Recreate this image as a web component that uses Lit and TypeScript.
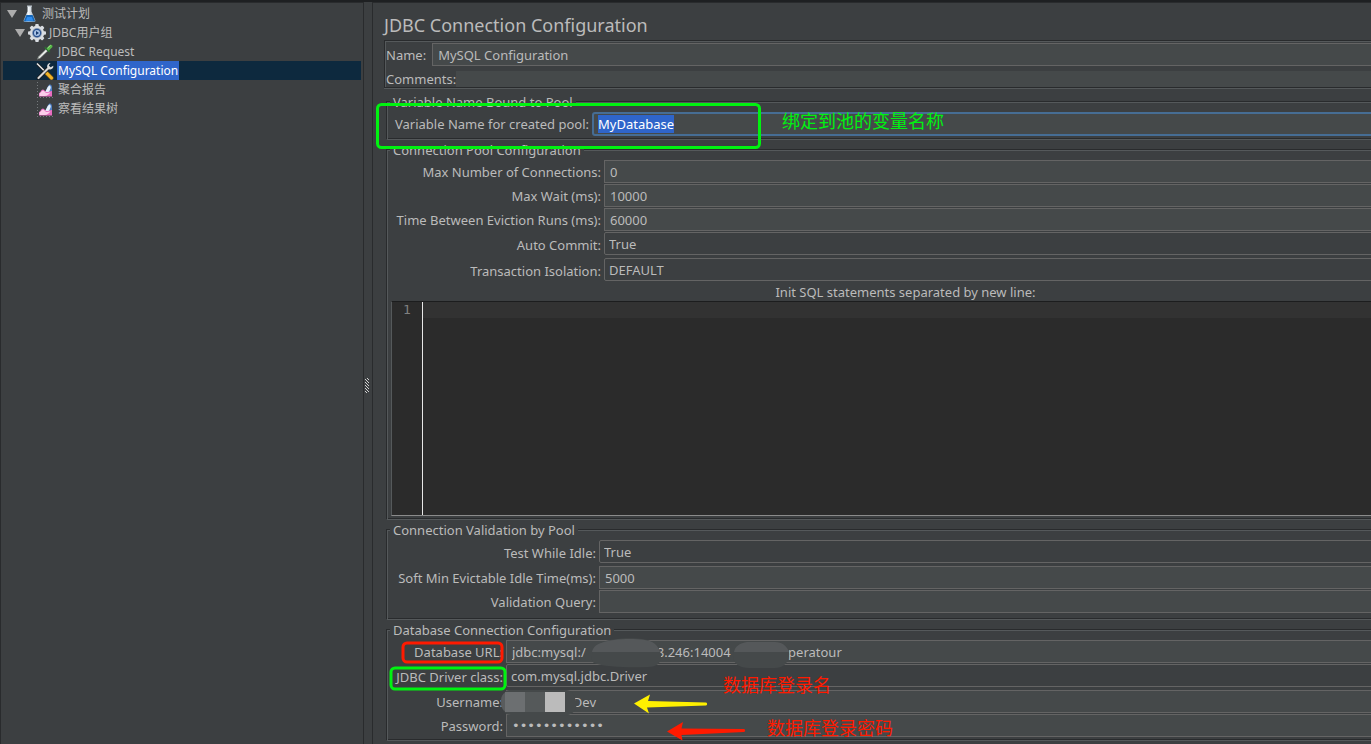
import { LitElement, html, css, svg } from "lit";
import { customElement, query, state } from "lit/decorators.js";

const flask = svg`<defs><linearGradient id="glass"><stop offset="0" stop-color="#8ea3b5"/><stop offset=".4" stop-color="#f4f8fb"/><stop offset="1" stop-color="#93a5b4"/></linearGradient></defs><path d="M7.500 1h4v5.500l3.800 8.500c.5 1.200-.1 2-1.300 2H5c-1.200 0-1.800-.8-1.300-2l3.800-8.500z" fill="url(#glass)"/><path d="M6.400 10h6.200l2.200 5.200c.3.800-.1 1.300-.9 1.300H5.100c-.8 0-1.200-.5-.9-1.300z" fill="#1667b8"/><path d="M7.200 12h4.600l1.500 3.800H5.700z" fill="#2c8cf0"/><rect x="7" y="0.500" width="5" height="1.200" fill="#b9c4cc"/>`;
const gear = svg`<g fill="#d9dde2">${[0, 45, 90, 135].map(
  (a) => svg`<rect x="7.200" y="0" width="3.600" height="18" rx="1" transform="rotate(${a} 9 9)"/>`
)}<circle cx="9" cy="9" r="7.200"/></g><circle cx="9" cy="9" r="5" fill="#8b9cb4"/><circle cx="9" cy="9" r="4.200" fill="#2a5290"/><circle cx="9" cy="9" r="3" fill="#a9c3e6"/><path d="M8 7l3 2-3 2z" fill="#173a70"/>`;
const dropper = svg`<path d="M1 16.500l1.200-3L10 6l2 2-7.800 7.500z" fill="#8e9692"/><path d="M2.500 14.500L10 6.800l1.200 1.200L3.600 15z" fill="#f2f4f2"/><path d="M8.800 4.200l5 5" stroke="#2b6b30" stroke-width="1.800"/><path d="M10.500 5.500L14 2c1.200-1.200 3.400.8 2.200 2.200L12.700 7.700z" fill="#56b848"/><path d="M11.500 5L14.600 2.300" stroke="#a4e094"/>`;
const tools = svg`<path d="M1.200 1.800L9 9.600" stroke="#15181a" stroke-width="3"/><path d="M1 1.500L9 9.500" stroke="#e8e8e8" stroke-width="1.600"/><path d="M10 10.500l5.500 5.500" stroke="#8a5c0c" stroke-width="4.200" stroke-linecap="round"/><path d="M10 10.500l5.500 5.500" stroke="#f0b52a" stroke-width="3" stroke-linecap="round"/><path d="M2.500 16L12 6.500" stroke="#15181a" stroke-width="3.600" stroke-linecap="round"/><path d="M2.500 16L12 6.500" stroke="#d8d8d8" stroke-width="2.200" stroke-linecap="round"/><path d="M14.500 1L12.800 3.600l1.800 1.700 2.700-1.500c.4 2.400-1.700 4.200-4.200 3.400-2-.8-2.600-3-1.400-4.700.7-1 1.700-1.500 2.800-1.500z" fill="#dcdcdc"/>`;
const chart = svg`<path d="M1.500 1v15M1 16.500h16" stroke="#75797c" stroke-dasharray="1 2" fill="none"/><path d="M8 13c2-1.500 2.500-7 5.500-9.500 1.500-.5 2.500 1 2.500 3V15H8z" fill="#4f7fc4"/><path d="M8.500 11.500c2-2 2.500-5.500 4.500-6.800 1.200-.4 1.900.8 1.700 2.300L12.500 12.500z" fill="#e6f1fb"/><path d="M3 15.500v-3.500c1.500 0 2-3.500 4-3.500 1.600 0 2 2.500 3.500 2.500s3-.5 5.500-1v5.500z" fill="#e86cc0"/><path d="M3.500 15v-2.600c1.500-.3 2-2.800 3.500-2.800s2 2.400 3.500 2.400c1.200 0 2.500-.3 4-.7-1.500 2-3 3.700-6 3.700z" fill="#fbcdea"/>`;

interface Field {
  id: string;
  label: string;
  kind: "text" | "select" | "password";
  value: string;
}

const sp = (n: number) => "\u00a0".repeat(n);

const poolFields: Field[] = [
  { id: "max", label: "Max Number of Connections:", kind: "text", value: "0" },
  { id: "wait", label: "Max Wait (ms):", kind: "text", value: "10000" },
  { id: "evict", label: "Time Between Eviction Runs (ms):", kind: "text", value: "60000" },
  { id: "commit", label: "Auto Commit:", kind: "select", value: "True" },
  { id: "iso", label: "Transaction Isolation:", kind: "select", value: "DEFAULT" },
];
const checkFields: Field[] = [
  { id: "idle", label: "Test While Idle:", kind: "select", value: "True" },
  { id: "soft", label: "Soft Min Evictable Idle Time(ms):", kind: "text", value: "5000" },
  { id: "query", label: "Validation Query:", kind: "text", value: "" },
];
const dbFields: Field[] = [
  { id: "url", label: "Database URL:", kind: "text", value: `jdbc:mysql:/${sp(21)}8.246:14004${sp(17)}peratour` },
  { id: "driver", label: "JDBC Driver class:", kind: "select", value: "com.mysql.jdbc.Driver" },
  { id: "user", label: "Username:", kind: "text", value: `${sp(18)}Dev` },
  { id: "pass", label: "Password:", kind: "password", value: "............" },
];

@customElement("app-root")
export class AppRoot extends LitElement {
  @state() private selected = "MySQL Configuration";
  @query("#pool") private pool!: HTMLInputElement;

  static styles = css`
    :host {
      display: block;
      height: 100vh;
      overflow: clip;
      background: #3c3f41;
      color: #bbbbbb;
      font: 13px/16px "Noto Sans", "Noto Sans CJK SC", sans-serif;
    }
    * { box-sizing: border-box; }
    .window {
      position: relative;
      display: grid;
      grid-template-columns: 364px 8px minmax(0, 1fr);
      height: 100%;
      border-top: 2px solid #1e2022;
      overflow: clip;
    }
    .side { border: solid #292b2d; border-width: 1px 1px 0; padding: 1px 2px 0; }
    .tree { list-style: none; margin: 0; padding: 0; font-size: 12px; }
    .row { display: flex; align-items: center; height: 19px; padding-left: 33px; }
    .row.root { padding-left: 4px; }
    .row.group { padding-left: 12px; }
    .row.on { background: #0d293e; }
    .node {
      font: inherit; color: inherit; border: 0; background: none; margin-left: 3px;
      padding: 0 1px; height: 19px; white-space: nowrap;
    }
    .group .node { margin-left: 2px; }
    .on .node { background: #2f65ca; color: #fff; }
    .twist { width: 10px; height: 8px; margin-right: 3px; flex: none; }
    .ico { width: 18px; height: 18px; flex: none; }
    .split { display: flex; align-items: center; justify-content: center; padding: 26px 2px 0 0; }
    .main {
      border: solid #292b2d;
      border-width: 1px 0 0 1px;
      padding-left: 11px;
      overflow: clip;
    }
    .form { margin-right: -50px; }
    h1 { font-size: 18px; line-height: 24px; font-weight: 400; margin: 0; padding: 10px 0 3px; }
    .head {
      border: solid #292b2d; border-width: 1px 0 1px 1px;
      box-shadow: inset 1px 1px 0 #55595b, 0 1px 0 #55595b;
      padding: 2px 0 0 1px;
    }
    .line { display: flex; align-items: center; gap: 6px; }
    .line.tight { gap: 0; padding-top: 5px; }
    .field {
      flex: 1; min-width: 0; width: 100%; height: 23px; margin: 0; padding: 0 5px;
      border: 1px solid #646464; border-radius: 0; outline: 0;
      background: #45494a; color: #bbbbbb; font: inherit; appearance: none;
    }
    .field.flat { border: 0; height: 16px; }
    .field[type="password"] { font-family: "DejaVu Sans", sans-serif; }
    select.field { background: #3c3f41; padding: 0 4px; border-radius: 2px; margin-bottom: 2px; }
    .groups { padding: 6px 0 0 3px; }
    fieldset {
      min-width: 0; margin: 0 0 2px; padding: 2px 0 3px 3px;
      border: 1px solid #55595b; box-shadow: -1px -1px 0 #292b2d, 0 -1px 0 #292b2d inset;
    }
    fieldset.check { padding-bottom: 6px; }
    legend { padding: 0 3px; margin-left: -1px; background: #3c3f41; height: 16px; }
    .grid { display: grid; row-gap: 1px; column-gap: 3px; align-items: center; }
    .grid label { text-align: right; white-space: nowrap; }
    .g1 { grid-template-columns: 198px minmax(0, 1fr); }
    .g2 { grid-template-columns: 210px minmax(0, 1fr); }
    .g3 { grid-template-columns: 205px minmax(0, 1fr); }
    .g4 { grid-template-columns: 112px minmax(0, 1fr); }
    .field.focus { height: 24px; padding: 0 4px; border: 2px solid #466d94; border-radius: 3px; }
    .focus::selection { background: #2f65ca; color: #fff; }
    .caption { display: block; text-align: center; line-height: 18px; }
    .editor {
      display: flex; height: 215px; background: #2b2b2b;
      border: solid; border-width: 1px 0 1px 1px; border-color: #1c1d1e #1c1d1e #8b8b8b #55595b;
    }
    .gutter { width: 31px; border-right: 1px solid #e8e8e8; padding: 0 11px; color: #808080; font: 13px/16px "DejaVu Sans Mono", monospace; }
    .code { flex: 1; border: 0; outline: 0; resize: none; padding: 0; margin: 0; color: #bbb; background: linear-gradient(#323232 16px, #2b2b2b 16px); }
    .over { position: absolute; left: 0; top: -2px; width: 1371px; height: 744px; pointer-events: none; }
    .note { position: absolute; white-space: nowrap; font: 18px/24px "Noto Sans CJK SC", sans-serif; color: #ff1a00; }
    .n1 { left: 782px; top: 106px; color: #00f210; }
    .n2 { left: 723px; top: 670px; }
    .n3 { left: 767px; top: 713px; }
  `;

  firstUpdated() {
    this.pool.focus({ preventScroll: true });
    this.pool.select();
  }

  private node(name: string, level: string, icon: unknown, open = false) {
    return html`<li class="row ${level} ${this.selected === name ? "on" : ""}">
      ${open ? html`<svg class="twist" viewBox="0 0 10 8"><path d="M0 0h10L5 8z" fill="#adadad" /></svg>` : ""}
      <svg class="ico" viewBox="0 0 18 18">${icon}</svg>
      <button class="node" @click=${() => (this.selected = name)}>${name}</button>
    </li>`;
  }

  private fields(list: Field[]) {
    return list.map(
      (f) => html`<label for=${f.id}>${f.label}</label>
        ${f.kind === "select"
          ? html`<select class="field" id=${f.id}><option>${f.value}</option></select>`
          : html`<input class="field" id=${f.id} type=${f.kind} .value=${f.value} autocomplete="off" />`}`
    );
  }

  render() {
    return html`<div class="window">
      <nav class="side">
        <ul class="tree">
          ${this.node("测试计划", "root", flask, true)}
          ${this.node("JDBC用户组", "group", gear, true)}
          ${this.node("JDBC Request", "", dropper)}
          ${this.node("MySQL Configuration", "", tools)}
          ${this.node("聚合报告", "", chart)}
          ${this.node("察看结果树", "", chart)}
        </ul>
      </nav>
      <div class="split">
        <svg width="4" height="16" viewBox="0 0 4 16">
          ${[0, 3, 6, 9, 12].map((y) => svg`<path d="M0 ${y + 1}h1v1h-1zM1 ${y + 2}h1v1h-1zM2 ${y}h1v1h-1zM3 ${y + 1}h1v1h-1z" fill="#d0d0d0"/>`)}
        </svg>
      </div>
      <main class="main">
        <form class="form">
          <h1>JDBC Connection Configuration</h1>
          <div class="head">
            <div class="line"><label for="name">Name:</label><input class="field" id="name" value="MySQL Configuration" /></div>
            <div class="line tight"><label for="comments">Comments:</label><input class="field flat" id="comments" /></div>
          </div>
          <div class="groups">
            <fieldset>
              <legend>Variable Name Bound to Pool</legend>
              <div class="grid g1">
                <label for="pool">Variable Name for created pool:</label>
                <input class="field focus" id="pool" value="MyDatabase" autocomplete="off" />
              </div>
            </fieldset>
            <fieldset>
              <legend>Connection Pool Configuration</legend>
              <div class="grid g2">${this.fields(poolFields)}</div>
              <label class="caption" for="sql">Init SQL statements separated by new line:</label>
              <div class="editor"><div class="gutter">1</div><textarea class="code" id="sql"></textarea></div>
            </fieldset>
            <fieldset class="check">
              <legend>Connection Validation by Pool</legend>
              <div class="grid g3">${this.fields(checkFields)}</div>
            </fieldset>
            <fieldset>
              <legend>Database Connection Configuration</legend>
              <div class="grid g4">${this.fields(dbFields)}</div>
            </fieldset>
          </div>
        </form>
      </main>
      <svg class="over" viewBox="0 0 1371 744">
        <path d="M594 663c-5-3-1-16 7-20 12-6 44-6 51-1 6 3 9 9 9 14 0 7-4 11-13 11-18 1-44 0-54-4z" fill="#45494a" />
        <path d="M592 652c1-5 5-8 9-9 12-5 44-5 51-1 4 2 7 6 8 10z" fill="#55585a" />
        <path d="M733 656c0-9 6-13 14-14h28c9 0 15 6 14 14-1 8-7 12-14 12h-26c-9 0-16-4-16-12z" fill="#45494a" />
        <path d="M734 652c1-6 6-9 13-10h28c7 0 12 4 14 10z" fill="#55585a" />
        <path d="M501 702c0-8 4-12 10-12h55c5 0 8 4 9 8 2 5 2 9 0 12-4 6-10 6-20 5h-44c-6 0-10-5-10-13z" fill="#45494a" />
        <path d="M501 702c0-6 2-9 6-10v20c-4-1-6-5-6-10z" fill="#595c5e" />
        <path d="M505 692h20v20h-20z" fill="#6c6f71" />
        <path d="M525 692h20v20h-20z" fill="#55595a" />
        <path d="M545 692h20v20h-20z" fill="#bbbbbb" />
        <path d="M634 703.500L650 694.500 648 701l58 1.500c1.500.3 1.500 2.700 0 3L647 707.500l2 6z" fill="#fff000" />
        <path d="M667 731.500L683 722l-1.500 6.500 62.500.5c1.500.3 1.500 2.700 0 3L681.500 735l1 5.500z" fill="#ff1a00" />
        <g fill="none" stroke-width="3">
          <rect x="377.500" y="104.500" width="382" height="43" rx="4" stroke="#00f210" />
          <rect x="403" y="643" width="99" height="19" rx="4" stroke="#ff1a00" />
          <rect x="391" y="668" width="114" height="21" rx="4" stroke="#00f210" />
        </g>
      </svg>
      <span class="note n1">绑定到池的变量名称</span>
      <span class="note n2">数据库登录名</span>
      <span class="note n3">数据库登录密码</span>
    </div>`;
  }
}
